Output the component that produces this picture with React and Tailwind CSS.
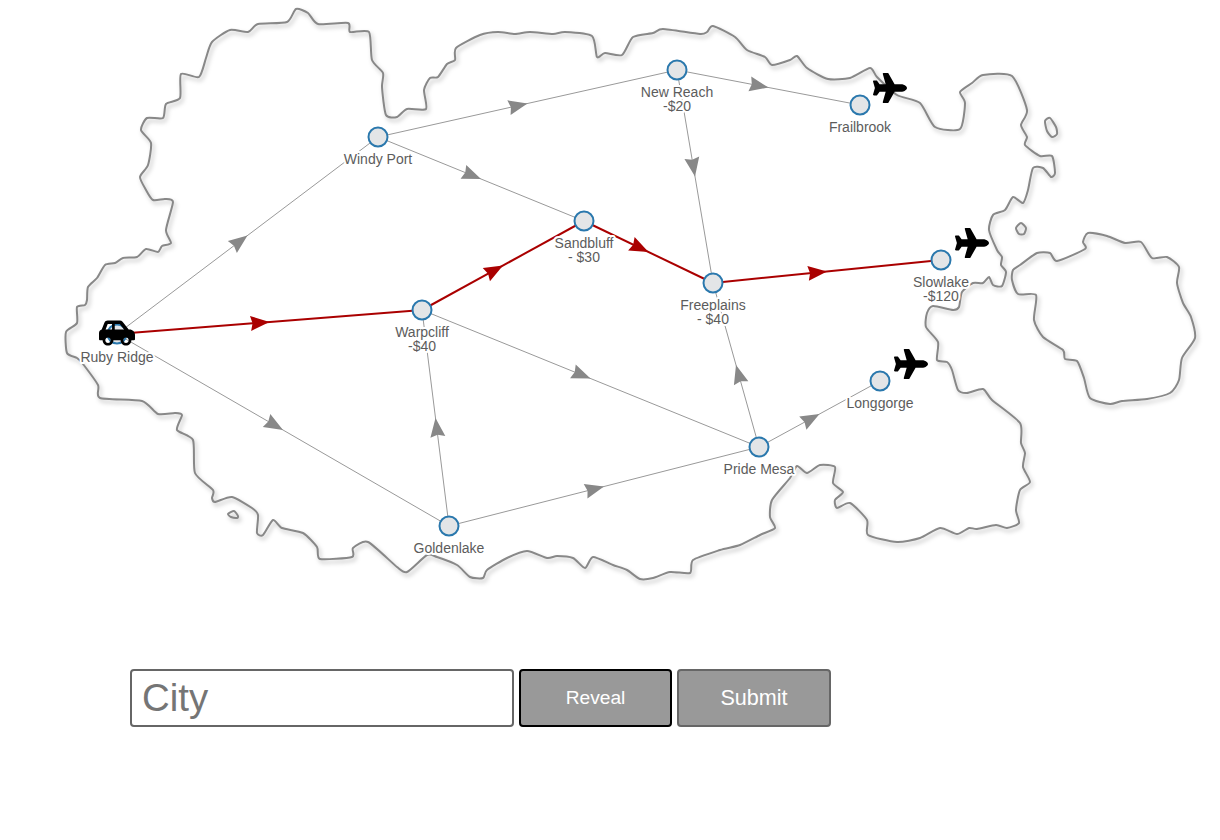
import React from 'react';
import { FaPlane, FaCarSide } from 'react-icons/fa';

const nodes = {
  ruby: { x: 117, y: 334, name: 'Ruby Ridge', dy: 28 },
  windy: { x: 378, y: 137, name: 'Windy Port' },
  reach: { x: 677, y: 70, name: 'New Reach', cost: '-$20' },
  frail: { x: 860, y: 105, name: 'Frailbrook' },
  sand: { x: 584, y: 221, name: 'Sandbluff', cost: '- $30' },
  warp: { x: 422, y: 310, name: 'Warpcliff', cost: '-$40' },
  free: { x: 713, y: 283, name: 'Freeplains', cost: '- $40' },
  slow: { x: 941, y: 260, name: 'Slowlake', cost: '-$120' },
  long: { x: 880, y: 381, name: 'Longgorge' },
  pride: { x: 759, y: 447, name: 'Pride Mesa' },
  gold: { x: 449, y: 526, name: 'Goldenlake' },
};

const grayEdges = [
  ['ruby', 'windy'], ['ruby', 'gold'], ['windy', 'reach'], ['windy', 'sand'],
  ['reach', 'frail'], ['reach', 'free'], ['warp', 'pride'], ['gold', 'warp'],
  ['gold', 'pride'], ['pride', 'free'], ['pride', 'long'],
];
const redEdges = [['ruby', 'warp'], ['warp', 'sand'], ['sand', 'free'], ['free', 'slow']];

const mainland = [
  [87,300],[88,287],[97,278],[105,265],[115,263],[123,258],[137,257],[146,249],[158,252],[162,246],[171,243],[166,230],[173,202],[165,199],[153,200],[146,190],[140,177],[148,165],[151,143],[141,130],[147,118],[163,118],[166,104],[180,98],[181,74],[199,77],[206,58],[212,42],[230,30],[248,32],[258,24],[287,22],[296,9],[308,13],[318,24],[348,23],[350,32],[369,32],[372,60],[383,73],[382,87],[386,115],[397,117],[407,109],[426,109],[424,90],[430,78],[438,77],[447,64],[455,60],[456,48],[480,35],[498,32],[515,34],[530,32],[553,34],[565,32],[592,36],[597,57],[605,53],[622,55],[633,37],[653,33],[663,29],[700,34],[707,32],[713,26],[735,37],[747,50],[765,57],[772,65],[790,60],[797,56],[807,68],[828,79],[850,78],[870,68],[877,77],[897,95],[920,103],[935,127],[960,129],[965,103],[960,92],[972,83],[983,75],[1012,76],[1027,110],[1021,125],[1027,137],[1025,145],[1040,156],[1052,156],[1055,173],[1051,177],[1043,168],[1033,168],[1028,190],[1023,203],[1013,197],[1005,210],[993,215],[989,230],[997,250],[1002,257],[1001,265],[1006,272],[1002,286],[993,285],[989,277],[983,283],[973,283],[962,292],[959,307],[953,310],[933,306],[927,313],[926,327],[938,342],[937,360],[947,362],[952,370],[958,390],[967,393],[983,389],[992,400],[1020,423],[1021,443],[1025,453],[1023,467],[1030,482],[1020,490],[1016,510],[1019,523],[1007,528],[996,525],[977,529],[969,528],[957,534],[940,528],[920,538],[897,542],[868,535],[867,520],[850,503],[837,508],[835,500],[843,492],[833,483],[835,467],[820,465],[807,473],[797,466],[790,478],[772,500],[770,517],[775,528],[760,535],[740,545],[720,550],[693,560],[690,573],[670,572],[653,578],[640,579],[627,570],[613,565],[593,557],[585,568],[573,558],[557,556],[547,558],[527,551],[507,558],[487,570],[483,578],[470,577],[457,565],[437,557],[427,555],[407,572],[397,567],[368,542],[353,548],[352,557],[320,559],[317,547],[303,533],[282,528],[273,520],[263,535],[257,533],[258,515],[252,508],[232,497],[215,502],[212,498],[213,490],[195,473],[193,440],[177,430],[182,415],[175,413],[158,414],[142,401],[100,398],[98,385],[83,364],[77,358],[67,353],[66,332],[77,323],[77,307],[85,305],
];
const eastIsland = [
  [1013,270],[1020,265],[1037,253],[1050,253],[1057,261],[1085,249],[1083,242],[1088,233],[1107,236],[1125,243],[1141,242],[1152,258],[1167,257],[1179,267],[1177,283],[1183,303],[1191,317],[1195,338],[1182,358],[1179,380],[1170,393],[1147,399],[1122,401],[1110,404],[1090,398],[1084,378],[1077,361],[1065,359],[1063,350],[1043,337],[1034,320],[1036,295],[1018,294],[1012,280],
];
const islets = [
  [[1045,121],[1050,118],[1056,127],[1057,134],[1052,137],[1047,131]],
  [[1016,228],[1021,223],[1026,228],[1024,234],[1019,234]],
  [[228,514],[234,511],[238,516],[237,518],[231,517]],
];

// closed spline through the traced coast points, kept tight so corners stay crisp
const smooth = (pts) => {
  const n = pts.length;
  const k = 9;
  let d = `M${pts[0][0]},${pts[0][1]}`;
  for (let i = 0; i < n; i++) {
    const p0 = pts[(i - 1 + n) % n];
    const p1 = pts[i];
    const p2 = pts[(i + 1) % n];
    const p3 = pts[(i + 2) % n];
    const c1x = p1[0] + (p2[0] - p0[0]) / k;
    const c1y = p1[1] + (p2[1] - p0[1]) / k;
    const c2x = p2[0] - (p3[0] - p1[0]) / k;
    const c2y = p2[1] - (p3[1] - p1[1]) / k;
    d += `C${c1x.toFixed(1)},${c1y.toFixed(1)} ${c2x.toFixed(1)},${c2y.toFixed(1)} ${p2[0]},${p2[1]}`;
  }
  return d + 'Z';
};

const Edge = ({ from, to, red }) => {
  const a = nodes[from];
  const b = nodes[to];
  const mx = (a.x + b.x) / 2;
  const my = (a.y + b.y) / 2;
  const angle = (Math.atan2(b.y - a.y, b.x - a.x) * 180) / Math.PI;
  return (
    <g>
      <line x1={a.x} y1={a.y} x2={b.x} y2={b.y} stroke={red ? '#aa0000' : '#999999'} strokeWidth={red ? 2 : 1} />
      <path
        d="M0,0 L-19,-7.5 L-17,0 L-19,7.5 Z"
        fill={red ? '#aa0000' : '#888888'}
        transform={`translate(${mx} ${my}) rotate(${angle})`}
      />
    </g>
  );
};

const Label = ({ x, y, children }) => (
  <text
    x={x}
    y={y}
    textAnchor="middle"
    fill="#5c5c5c"
    stroke="#ffffff"
    strokeWidth={4}
    strokeLinejoin="round"
    paintOrder="stroke"
    className="text-[14px] font-['Liberation_Sans',Arial,sans-serif]"
  >
    {children}
  </text>
);

const GameMap = () => (
  <svg width="1220" height="640" viewBox="0 0 1220 640" className="block">
    <g fill="none" stroke="#888888" strokeWidth="2" strokeLinejoin="round" className="drop-shadow-[2px_3px_2px_rgba(0,0,0,0.25)]">
      <path d={smooth(mainland)} />
      <path d={smooth(eastIsland)} />
      {islets.map((pts, i) => (
        <path key={i} d={smooth(pts)} />
      ))}
    </g>

    {grayEdges.map(([a, b]) => (
      <Edge key={a + b} from={a} to={b} />
    ))}
    {redEdges.map(([a, b]) => (
      <Edge key={a + b} from={a} to={b} red />
    ))}

    {Object.entries(nodes).map(([id, n]) => (
      <g key={id}>
        <Label x={n.x} y={n.y + (n.dy || 27)}>{n.name}</Label>
        {n.cost && <Label x={n.x} y={n.y + 41}>{n.cost}</Label>}
      </g>
    ))}
    {Object.entries(nodes).map(([id, n]) => (
      <circle key={id} cx={n.x} cy={n.y} r="9.5" fill="#e3e5e7" stroke="#2a78ad" strokeWidth="2" />
    ))}

    <FaCarSide x={99} y={315} size={36} color="#000000" />
    <FaPlane x={873} y={71} size={34} color="#000000" />
    <FaPlane x={955} y={226} size={34} color="#000000" />
    <FaPlane x={894} y={347} size={34} color="#000000" />
  </svg>
);

export default function App() {
  return (
    <div className="font-['Liberation_Sans',Arial,sans-serif] bg-white min-h-[840px]">
      <GameMap />
      <div className="flex gap-[5px] pl-[130px] pt-[29px]">
        <input
          type="text"
          placeholder="City"
          className="w-[384px] h-[58px] border-2 border-[#666666] rounded-[4px] px-[10px] text-[38.4px] text-black placeholder:text-[#757575] outline-none"
        />
        <button className="w-[153px] h-[58px] bg-[#999999] border-2 border-black rounded-[4px] text-white text-[19.2px]">
          Reveal
        </button>
        <button className="w-[154px] h-[58px] bg-[#999999] border-2 border-[#666666] rounded-[4px] text-white text-[21.6px]">
          Submit
        </button>
      </div>
    </div>
  );
}
